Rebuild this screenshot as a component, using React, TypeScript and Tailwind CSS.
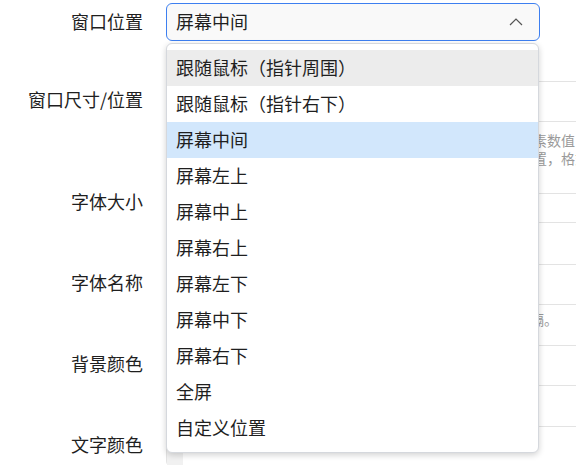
import React from 'react';

const options = [
  '跟随鼠标（指针周围）',
  '跟随鼠标（指针右下）',
  '屏幕中间',
  '屏幕左上',
  '屏幕中上',
  '屏幕右上',
  '屏幕左下',
  '屏幕中下',
  '屏幕右下',
  '全屏',
  '自定义位置',
];

const hovered = 0;
const selected = 2;

const Label = ({ children }: { children: React.ReactNode }) => (
  <div className="w-[143px] shrink-0 pb-[1px] text-right text-[18px] leading-[37px] text-[#1f1f1f]">{children}</div>
);

const Input = ({ swatch = false }: { swatch?: boolean }) => (
  <div className="ml-[23px] flex h-[41px] w-[430px] shrink-0 items-stretch rounded-md border border-[#e3e3e3] bg-white">
    {swatch && <div className="w-[16px] bg-[#f1f1f1]" />}
  </div>
);

export default function App() {
  return (
    <div
      className="relative h-[465px] w-[576px] overflow-hidden bg-white text-[#1f1f1f]"
      style={{ fontFamily: '"Noto Sans CJK SC", "Noto Sans", sans-serif' }}
    >
      <div className="flex flex-col pt-[3px]">
        {/* 窗口位置 */}
        <div className="flex h-[38px] items-start">
          <Label>窗口位置</Label>
          <div className="ml-[23px] flex h-[38px] w-[374px] shrink-0 items-center justify-between rounded-md border border-[#3d7ff0] bg-[#f9f9f9] pl-[9px] pr-[16px] text-[18px]">
            <span className="pb-[1px]">屏幕中间</span>
            <svg width="14" height="8" viewBox="0 0 14 8" fill="none">
              <polyline points="1,7 7,1 13,7" stroke="#555" strokeWidth="1.2" />
            </svg>
          </div>
        </div>

        {/* 窗口尺寸/位置 */}
        <div className="mt-[40px] flex items-start">
          <Label>窗口尺寸/位置</Label>
          <Input />
        </div>
        <div className="ml-[169px] mt-[9px] whitespace-nowrap text-[14px] leading-[18px] text-[#9a9a9a]">
          <div>依次填写窗口的宽度、高度、左边距与上边距，单位均为像素数值，用英文逗号分隔。</div>
          <div>留空则程序根据字体大小自动计算窗口的尺寸并使用默认位置，格式错误时将被忽略。</div>
        </div>

        {/* 字体大小 */}
        <div className="mt-[16px] flex h-[40px] items-start">
          <Label>字体大小</Label>
          <div className="ml-[23px] mt-[10px] h-[30px] w-[430px] shrink-0 rounded-md border border-[#e3e3e3] bg-white" />
        </div>

        {/* 字体名称 */}
        <div className="mt-[41px] flex items-start">
          <Label>字体名称</Label>
          <Input />
        </div>
        <div className="ml-[166px] mt-[5px] whitespace-nowrap text-[14px] leading-[18px] text-[#9a9a9a]">
          填写系统已安装字体的名称，多个字体之间使用英文逗号分隔。
        </div>

        {/* 背景颜色 */}
        <div className="mt-[17px] flex items-start">
          <Label>背景颜色</Label>
          <Input swatch />
        </div>

        {/* 文字颜色 */}
        <div className="mt-[40px] flex items-start">
          <Label>文字颜色</Label>
          <Input swatch />
        </div>
      </div>

      {/* open dropdown */}
      <div className="absolute left-[166px] top-[43px] w-[373px] rounded-md border border-[#d5d8dd] bg-white py-[6px] shadow-[0_2px_6px_rgba(0,0,0,0.18)]">
        {options.map((o, i) => (
          <div
            key={o}
            className={
              'flex h-[36px] items-center pb-[2px] pl-[9px] text-[18px] ' +
              (i === selected ? 'bg-[#d2e7fc]' : i === hovered ? 'bg-[#ececec]' : 'bg-white')
            }
          >
            {o}
          </div>
        ))}
      </div>
    </div>
  );
}
